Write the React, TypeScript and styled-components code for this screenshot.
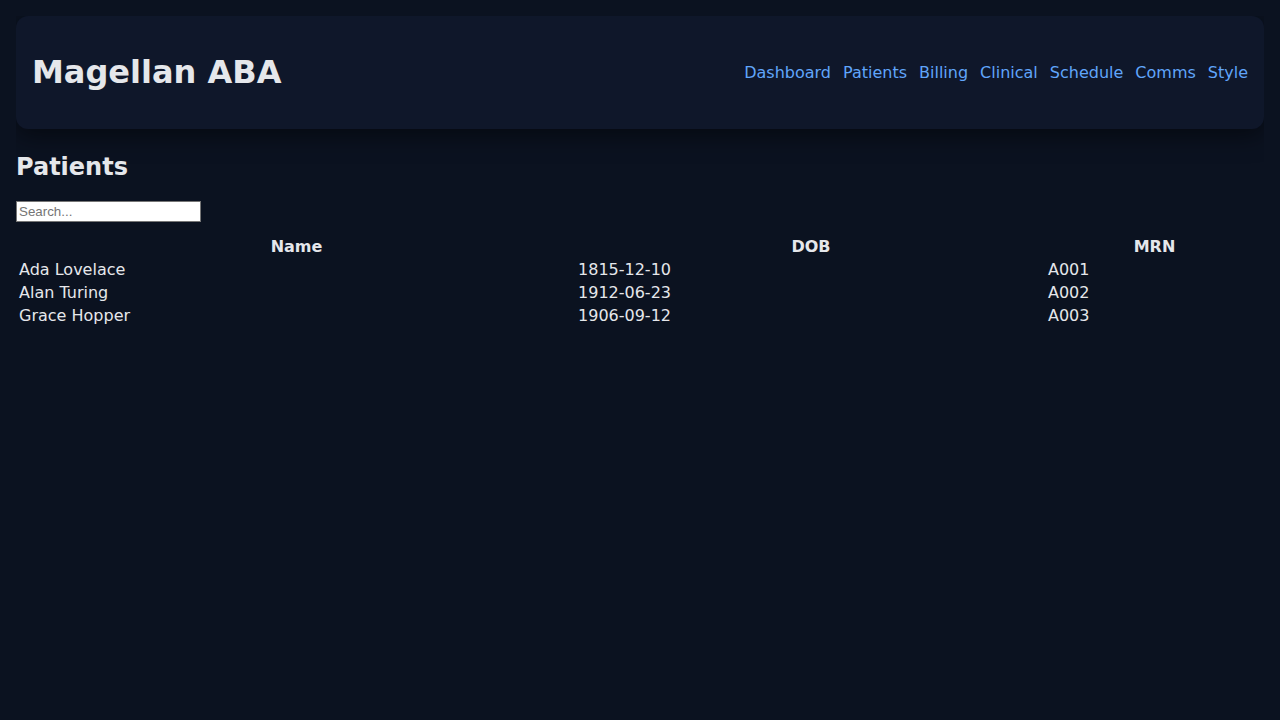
import React from "react";
import styled, { createGlobalStyle } from "styled-components";

const GlobalStyle = createGlobalStyle`
  html, body {
    background: #0b1220;
    color: #e5e7eb;
    font-family: "DejaVu Sans", sans-serif;
  }
  body {
    margin: 16px;
  }
`;

const Header = styled.header`
  display: flex;
  align-items: center;
  justify-content: space-between;
  padding: 0 16px;
  background: #0f172a;
  border-radius: 12px;
  box-shadow: 0 6px 24px rgba(0, 0, 0, 0.5);
`;

const Title = styled.h1`
  font-size: 32px;
  font-weight: bold;
  margin: 38px 0;
  line-height: 37px;
  color: #e5e7eb;
`;

const Nav = styled.nav`
  display: flex;
  gap: 12px;
`;

const NavLink = styled.a`
  color: #60a5fa;
  text-decoration: none;
  font-size: 16px;
  line-height: 19px;
`;

const PageTitle = styled.h2`
  font-size: 24px;
  font-weight: bold;
  margin: 24px 0 20px;
`;

const Search = styled.input`
  display: block;
  width: 185px;
  height: 21px;
  box-sizing: border-box;
  font-family: "Liberation Sans", sans-serif;
  font-size: 13.33px;
  padding: 1px 2px;
  border: 1px solid #767676;
  background: #ffffff;
  color: #000;
  margin: 0 0 12px;
  &::placeholder {
    color: #757575;
  }
`;

const Table = styled.table`
  width: 100%;
  border-spacing: 2px;
  font-size: 16px;
  color: #e5e7eb;
`;

const Th = styled.th`
  padding: 1px;
  font-weight: bold;
  text-align: center;
`;

const Td = styled.td`
  padding: 1px;
`;

const links = ["Dashboard", "Patients", "Billing", "Clinical", "Schedule", "Comms", "Style"];

const patients = [
  { name: "Ada Lovelace", dob: "1815-12-10", mrn: "A001" },
  { name: "Alan Turing", dob: "1912-06-23", mrn: "A002" },
  { name: "Grace Hopper", dob: "1906-09-12", mrn: "A003" },
];

export default function App() {
  return (
    <>
      <GlobalStyle />
      <Header>
        <Title>Magellan ABA</Title>
        <Nav>
          {links.map((l) => (
            <NavLink key={l} href="#">
              {l}
            </NavLink>
          ))}
        </Nav>
      </Header>
      <main>
        <PageTitle>Patients</PageTitle>
        <Search placeholder="Search..." />
        <Table>
          <thead>
            <tr>
              <Th>Name</Th>
              <Th>DOB</Th>
              <Th>MRN</Th>
            </tr>
          </thead>
          <tbody>
            {patients.map((p) => (
              <tr key={p.mrn}>
                <Td>{p.name}</Td>
                <Td>{p.dob}</Td>
                <Td>{p.mrn}</Td>
              </tr>
            ))}
          </tbody>
        </Table>
      </main>
    </>
  );
}
